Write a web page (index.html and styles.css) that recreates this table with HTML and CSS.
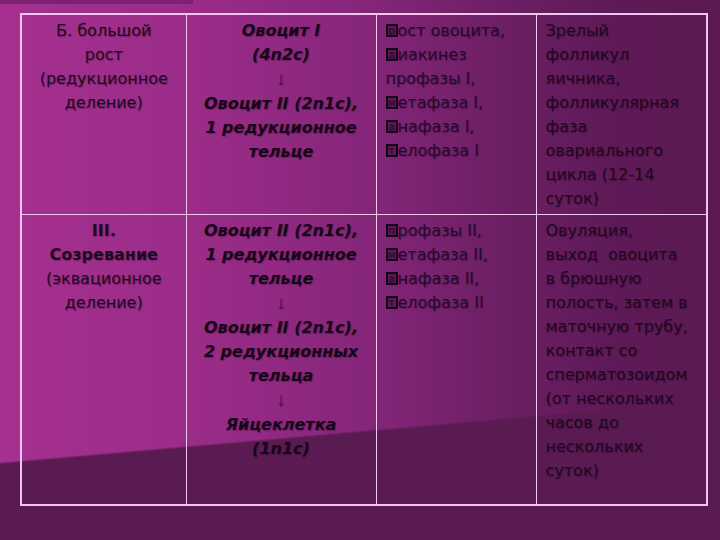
FILE: index.html
```html
<!DOCTYPE html>
<html lang="ru">
<head>
<meta charset="utf-8">
<title>Овогенез</title>
<link rel="stylesheet" href="styles.css">
</head>
<body>
<div class="slide">
  <table class="stages">
    <colgroup>
      <col class="c1"><col class="c2"><col class="c3"><col class="c4">
    </colgroup>
    <tr class="row1">
      <td class="stage">Б. большой<br>рост<br>(редукционное<br>деление)</td>
      <td class="cells">Овоцит I<br>(4n2c)<br><span class="arrow">↓</span><br>Овоцит II (2n1c),<br>1 редукционное<br>тельце</td>
      <td class="phases"><span class="box">р</span>ост овоцита,<br><span class="box">д</span>иакинез<br>профазы I,<br><span class="box">м</span>етафаза I,<br><span class="box">а</span>нафаза I,<br><span class="box">т</span>елофаза I</td>
      <td class="notes">Зрелый<br>фолликул<br>яичника,<br>фолликулярная<br>фаза<br>овариального<br>цикла (12-14<br>суток)</td>
    </tr>
    <tr class="row2">
      <td class="stage"><b>III.<br>Созревание</b><br>(эквационное<br>деление)</td>
      <td class="cells">Овоцит II (2n1c),<br>1 редукционное<br>тельце<br><span class="arrow">↓</span><br>Овоцит II (2n1c),<br>2 редукционных<br>тельца<br><span class="arrow">↓</span><br>Яйцеклетка<br>(1n1c)</td>
      <td class="phases"><span class="box">п</span>рофазы II,<br><span class="box">м</span>етафаза II,<br><span class="box">а</span>нафаза II,<br><span class="box">т</span>елофаза II</td>
      <td class="notes">Овуляция,<br>выход&nbsp; овоцита<br>в брюшную<br>полость, затем в<br>маточную трубу,<br>контакт со<br>сперматозоидом<br>(от нескольких<br>часов до<br>нескольких<br>суток)</td>
    </tr>
  </table>
</div>
</body>
</html>
```

FILE: styles.css
```css
html, body {
  margin: 0;
  padding: 0;
  width: 720px;
  height: 540px;
  overflow: hidden;
}

body {
  background:
    linear-gradient(#7c2270, #7c2270) no-repeat 0 0 / 193px 4px,
    linear-gradient(175deg, rgba(90, 27, 82, 0) 76.6%, #5a1b52 77%),
    linear-gradient(90deg, #a5308f 0%, #9a2c88 28%, #86267a 50%, #6c1f64 70%, #5e1a57 85%, #5b1a53 100%);
  font-family: "DejaVu Sans", "Liberation Sans", sans-serif;
  font-size: 16px;
  line-height: 24px;
  color: #1c0a22;
}

.slide {
  padding: 13px 0 0 20px;
}

.stages {
  border-collapse: collapse;
  table-layout: fixed;
  width: 686px;
  border: 2px solid #f3c4ef;
}

.c1 { width: 165px; }
.c2 { width: 190px; }
.c3 { width: 160px; }
.c4 { width: 171px; }

.stages td {
  border: 1px solid #f1c9ee;
  vertical-align: top;
  padding: 4px 0 0;
  white-space: nowrap;
  text-shadow: 1px 1px 1px rgba(30, 0, 30, 0.3);
}

.row1 td { height: 195px; }
.row2 td { height: 285px; }

.stage {
  text-align: center;
}

.stage b {
  font-weight: bold;
}

.cells {
  text-align: center;
  font-weight: bold;
  font-style: italic;
  color: #170619;
  text-shadow: 1px 1px 2px rgba(20, 0, 20, 0.5);
}

.arrow {
  font-family: "Liberation Sans", sans-serif;
  font-size: 19px;
  font-weight: normal;
  font-style: normal;
  color: #3e1552;
}

.phases {
  padding-left: 9px !important;
  color: #240a30;
}

.notes {
  padding-left: 9px !important;
  color: #1e0822;
}

.box {
  display: inline-block;
  box-sizing: border-box;
  width: 12px;
  height: 13px;
  border: 2px solid #150716;
  background: rgba(30, 5, 35, 0.35);
  font-size: 10px;
  line-height: 9px;
  text-align: center;
  overflow: hidden;
  vertical-align: -1px;
  margin-right: 0;
}
```
